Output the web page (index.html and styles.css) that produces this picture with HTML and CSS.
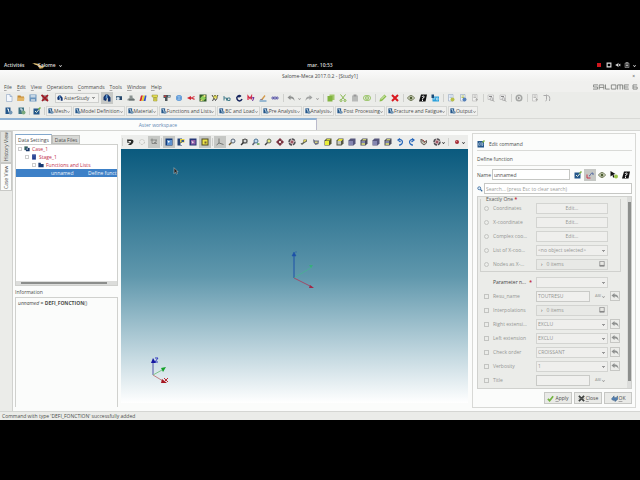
FILE: index.html
```html
<!DOCTYPE html>
<html lang="en">
<head>
<meta charset="utf-8">
<title>Salome-Meca 2017.0.2 - [Study1]</title>
<link rel="stylesheet" href="styles.css">
</head>
<body>
<svg class="sprite" aria-hidden="true">
  <symbol id="new" viewBox="0 0 16 16"><path d="M3 1h7l4 4v10H3z" fill="#f4f8fd" stroke="#7d97b8"/><path d="M10 1v4h4" fill="#c5d6ea" stroke="#7d97b8"/></symbol>
  <symbol id="open" viewBox="0 0 16 16"><path d="M1 3h6l1 2h6v9H1z" fill="#c48a35"/><path d="M2 7h13l-1 7H1z" fill="#e3b566"/></symbol>
  <symbol id="save" viewBox="0 0 16 16"><path d="M1 1h14v14H1z" fill="#6994bd"/><path d="M3 2h10v5H3z" fill="#c5d6e5"/><path d="M4 10h8v5H4z" fill="#b7cada"/></symbol>
  <symbol id="shut" viewBox="0 0 16 16"><path d="M2 2h12v12H2z" fill="#a99"/><path d="M1 2l13 12M14 2L2 14" stroke="#a01a25" stroke-width="3.500"/></symbol>
  <symbol id="aster" viewBox="0 0 16 16"><path d="M1 12V6l4-5h5l5 6v8h-5V8H8l-2 6z" fill="#12336f"/><path d="M6 2h3v7H5z" fill="#5f98cf"/></symbol>
  <symbol id="geom" viewBox="0 0 16 16"><path d="M2 4h12v8H2z" fill="#4d6c88"/><circle cx="6" cy="9" r="3" fill="#dce6ee"/><path d="M10 6h4v6h-4z" fill="#26466a"/></symbol>
  <symbol id="part" viewBox="0 0 16 16"><path d="M5 3h6v4l4 3v3H1v-3l4-2z" fill="#8a9291"/><path d="M4 10h11v3H4z" fill="#6b7372"/></symbol>
  <symbol id="mesh" viewBox="0 0 16 16"><path d="M4 3h4L5 14H1z" fill="#d22d34"/><path d="M8 3h4L9 14H5z" fill="#e8d22d"/><path d="M12 3h3l-2 11H9z" fill="#3555c9"/></symbol>
  <symbol id="note" viewBox="0 0 16 16"><path d="M2 2h11v4h-1v8H5V6H2z" fill="#e2dd56" stroke="#8c8a2c"/><path d="M6 7h5M6 10h5" stroke="#777328"/></symbol>
  <symbol id="flow" viewBox="0 0 16 16"><path d="M1 2h14v5H9v7H4V8H1z" fill="#4d555a"/><path d="M2 3h4v3H2z" fill="#c54141"/><path d="M10 3h4v3h-4z" fill="#9bc"/></symbol>
  <symbol id="globe" viewBox="0 0 16 16"><circle cx="8" cy="8" r="6" fill="#4386cf"/><path d="M2 8h12M8 2v12M4 4c3 2 6 2 8 0M4 12c3-2 6-2 8 0" stroke="#c5e0f7" fill="none"/></symbol>
  <symbol id="fish" viewBox="0 0 16 16"><path d="M0 8l8-4v3l7-3v2l-5 2 5 1v3L8 9v3z" fill="#cf2430"/></symbol>
  <symbol id="field" viewBox="0 0 16 16"><path d="M1 1h14v14H1z" fill="#315a28"/><path d="M2 9l5-6 7 5-5 6z" fill="#8fd05a"/><path d="M9 2h4v4H9zM3 11h4v3H3z" fill="#eadf80"/></symbol>
  <symbol id="xy" viewBox="0 0 16 16"><path d="M2 2l3 5 3-5 3 5 3-5M3 14l3-6 3 5 4-6" stroke="#444" stroke-width="2" fill="none"/><path d="M5 3h7v6H5z" fill="#e6db35" opacity=".7"/></symbol>
  <symbol id="hom" viewBox="0 0 16 16"><path d="M2 4v9M2 8h5v5M9 8h5v5H9z" stroke="#477f8c" stroke-width="2" fill="none"/></symbol>
  <symbol id="hook" viewBox="0 0 16 16"><path d="M12 5C8 1 2 5 4 10s8 5 10 0M8 2v5" stroke="#14235c" stroke-width="3" fill="none"/></symbol>
  <symbol id="med" viewBox="0 0 16 16"><path d="M2 12V4l4 5 3-5v7" stroke="#d7304b" stroke-width="2.500" fill="none"/><path d="M9 8l5-1-3 7" stroke="#6a2d99" stroke-width="2" fill="none"/></symbol>
  <symbol id="draw" viewBox="0 0 16 16"><path d="M1 14h14" stroke="#4483b8" stroke-width="2"/><path d="M4 11l7-9 2 2-6 8z" fill="#d39a4a"/><path d="M2 11h5" stroke="#447"/></symbol>
  <symbol id="links" viewBox="0 0 16 16"><path d="M2 6h3v4H2zM6 6h4v4H6zM11 6h3v4h-3z" stroke="#504da0" stroke-width="1.500" fill="#dde"/></symbol>
  <symbol id="undo" viewBox="0 0 16 16"><path d="M1 7l6-5v3c6 0 8 4 8 9-2-4-4-5-8-5v3z" fill="#8f9190"/></symbol>
  <symbol id="redo" viewBox="0 0 16 16"><path d="M15 7L9 2v3c-6 0-8 4-8 9 2-4 4-5 8-5v3z" fill="#a1a3a2"/></symbol>
  <symbol id="copy" viewBox="0 0 16 16"><path d="M5 1h10v11H5z" fill="#a2c86b"/><path d="M1 4h10v11H1z" fill="#82b440"/></symbol>
  <symbol id="cut" viewBox="0 0 16 16"><path d="M3 1l8 10M13 1L5 11" stroke="#86b74d" stroke-width="2"/><circle cx="4" cy="13" r="2" fill="none" stroke="#86b74d" stroke-width="2"/><circle cx="12" cy="13" r="2" fill="none" stroke="#86b74d" stroke-width="2"/></symbol>
  <symbol id="paste" viewBox="0 0 16 16"><path d="M2 3h12v12H2z" fill="#b8bab8"/><path d="M5 1h6v4H5z" fill="#999"/></symbol>
  <symbol id="dup" viewBox="0 0 16 16"><circle cx="6" cy="8" r="5" fill="none" stroke="#9bc56a" stroke-width="2"/><circle cx="10" cy="8" r="5" fill="none" stroke="#9bc56a" stroke-width="2"/><path d="M4 8h8M8 4v8" stroke="#9bc56a"/></symbol>
  <symbol id="pencil" viewBox="0 0 16 16"><path d="M1 15l1-5 9-9 4 4-9 9z" fill="#8bbd4b"/><path d="M4 11l8-8" stroke="#e5f2d4" stroke-width="2"/></symbol>
  <symbol id="del" viewBox="0 0 16 16"><path d="M2 2l12 12M14 2L2 14" stroke="#d91920" stroke-width="4"/></symbol>
  <symbol id="eye" viewBox="0 0 16 16"><path d="M1 8q7-10 14 0-7 10-14 0z" fill="#eef0df" stroke="#66704c" stroke-width="2"/><circle cx="8" cy="8" r="3" fill="#4c5d32"/></symbol>
  <symbol id="help" viewBox="0 0 16 16"><path d="M4 1h12l-3 14H0z" fill="#111"/><path d="M6 6c1-3 6-2 4 1L7 9v2m0 1v2" stroke="#fff" stroke-width="2" fill="none"/></symbol>
  <symbol id="fa" viewBox="0 0 16 16"><path d="M3 5h13v10H3z" fill="#2aa0db"/><path d="M1 1h5v7H1z" fill="#1b4c78"/><path d="M6 12V8h3M11 8h3v4h-3z" stroke="#fff" fill="none"/></symbol>
  <symbol id="docadd" viewBox="0 0 16 16"><path d="M3 1h9v13H3z" fill="#eef3fa" stroke="#8097b5"/><path d="M5 4h5M5 7h5" stroke="#7d9cc5"/><circle cx="11" cy="11" r="4" fill="#b8bf4a"/></symbol>
  <symbol id="docblue" viewBox="0 0 16 16"><path d="M3 1h9v13H3z" fill="#eef3fa" stroke="#8097b5"/><path d="M5 4h5M5 7h5" stroke="#b9c25c" stroke-width="2"/><circle cx="11" cy="11" r="4" fill="#5680b8"/></symbol>
  <symbol id="docgray" viewBox="0 0 16 16"><path d="M3 1h9v13H3z" fill="#f0f0ee" stroke="#aaa"/><path d="M5 4h5M5 7h5M9 11h5M11 8v6" stroke="#a8a8a6" stroke-width="1.500"/></symbol>
  <symbol id="docfind" viewBox="0 0 16 16"><path d="M2 2h11v9H2z" fill="#eee" stroke="#aaa"/><circle cx="9" cy="10" r="3" fill="#ddd" stroke="#888"/><path d="M11 12l3 3M4 5h6" stroke="#888" stroke-width="2"/></symbol>
  <symbol id="gear" viewBox="0 0 16 16"><circle cx="8" cy="8" r="5.500" fill="none" stroke="#a4a6a4" stroke-width="3"/><path d="M6 5l5 3-5 3z" fill="#999"/></symbol>
  <symbol id="bend" viewBox="0 0 16 16"><path d="M1 3h8q6 0 4 11M7 1v10q0 3-2 3" stroke="#aaa" stroke-width="2" fill="none"/></symbol>
  <symbol id="cmd" viewBox="0 0 16 16"><path d="M1 2h13v13H1z" fill="#24578a"/><path d="M5 5c-2 2-2 5 0 7M8 5v6M10 5c2 2 2 5 0 7" stroke="#dceaf4" stroke-width="1.500" fill="none"/><path d="M11 5l4-4" stroke="#83b64a" stroke-width="3"/></symbol>
  <symbol id="tag" viewBox="0 0 16 16"><path d="M1 1h10v13H1z" fill="#24578a"/><path d="M4 4h3v5h3" stroke="#e7f0f6" stroke-width="2" fill="none"/><circle cx="11" cy="11" r="4" fill="#7295b4"/></symbol>
  <symbol id="taggreen" viewBox="0 0 16 16"><path d="M1 1h11v13H1z" fill="#3f7384"/><path d="M4 4h4v5" stroke="#e7f0f6" stroke-width="2" fill="none"/><circle cx="11" cy="11" r="4" fill="#79a87c"/></symbol>
  <symbol id="edit" viewBox="0 0 16 16"><path d="M1 3h12v12H1z" fill="#24578a"/><path d="M4 8l3 3 5-6" stroke="#e7efe0" stroke-width="2" fill="none"/><path d="M11 5l4-4" stroke="#7ab042" stroke-width="3"/></symbol>
  <symbol id="dump" viewBox="0 0 16 16"><path d="M2 3h9q6 1 3 7l-4 4H4l4-4H3z" fill="#292b29"/><path d="M5 6h5v3H5z" fill="#eee"/></symbol>
  <symbol id="sync" viewBox="0 0 16 16"><circle cx="8" cy="8" r="5" fill="none" stroke="#c2c2bd" stroke-width="2" stroke-dasharray="4 2"/></symbol>
  <symbol id="axes" viewBox="0 0 16 16"><path d="M4 1v10h10M1 4h13M12 4v5H8" stroke="#747673" stroke-width="1.500" fill="none"/></symbol>
  <symbol id="trisel" viewBox="0 0 16 16"><path d="M6 1v9l9 3M6 10l-5 4" stroke="#747673" stroke-width="2" fill="none"/></symbol>
  <symbol id="selblue" viewBox="0 0 16 16"><path d="M1 1h14v14H1z" fill="#163d7b"/><path d="M4 4h10v10H4z" fill="#5c91cf"/><path d="M5 5l5 2-3 3z" fill="#fff"/></symbol>
  <symbol id="selmix" viewBox="0 0 16 16"><path d="M1 1h9v14H1z" fill="#264577"/><path d="M6 2h9v7H6z" fill="#e1cf48"/><path d="M9 4h5v4H9z" fill="#345a91"/><path d="M7 10h4v4H7z" fill="#f4f4ec"/></symbol>
  <symbol id="selpur" viewBox="0 0 16 16"><path d="M1 1h14v14H1z" fill="#253677"/><path d="M4 4h9v9H4z" fill="#8f5da6"/><path d="M5 6l5 2-3 3z" fill="#eee"/></symbol>
  <symbol id="selyel" viewBox="0 0 16 16"><path d="M1 1h14v14H1z" fill="#4e4b23"/><path d="M3 3h10v10H3z" fill="#ece347"/><path d="M7 7h4v4H7z" fill="#725c36"/></symbol>
  <symbol id="zoomfit" viewBox="0 0 16 16"><circle cx="10" cy="6" r="4" fill="#d9e4ee" stroke="#596574" stroke-width="2"/><path d="M7 9l-5 5" stroke="#6b572f" stroke-width="3"/></symbol>
  <symbol id="zoomdark" viewBox="0 0 16 16"><path d="M4 2h11v9H4z" fill="#8f928c"/><circle cx="10" cy="6" r="4" fill="#d5d8d7" stroke="#444" stroke-width="2"/><path d="M7 9l-5 5" stroke="#333" stroke-width="3"/></symbol>
  <symbol id="zoomgreen" viewBox="0 0 16 16"><circle cx="8" cy="6" r="4" fill="#bfdae9" stroke="#4a7294" stroke-width="2"/><path d="M5 9l-4 5" stroke="#596070" stroke-width="3"/><path d="M10 12h5" stroke="#5a9c4b" stroke-width="3"/></symbol>
  <symbol id="zoomyel" viewBox="0 0 16 16"><circle cx="10" cy="6" r="4" fill="#e5eb7e" stroke="#626c65" stroke-width="2"/><path d="M7 9l-5 5" stroke="#444" stroke-width="3"/></symbol>
  <symbol id="pan" viewBox="0 0 16 16"><path d="M8 0l4 4-2 2h1l1-2 4 4-4 4-1-2-1 0 2 2-4 4-4-4 2-2-2 2-4-4 4-4 2 2-2-2z" fill="#7a3542"/><path d="M6 6h4v4H6z" fill="#e9ddd8"/></symbol>
  <symbol id="orbit" viewBox="0 0 16 16"><circle cx="8" cy="8" r="6" fill="#dac9cb" stroke="#4c4c50" stroke-width="3" stroke-dasharray="7 2"/><path d="M5 8h6M8 5v6" stroke="#8a3242" stroke-width="2"/></symbol>
  <symbol id="scale" viewBox="0 0 16 16"><path d="M1 11l5-2 1-6h7v4l-5 3-5 4z" fill="#63665d"/><path d="M7 7l5-3" stroke="#ddd35b" stroke-width="3"/></symbol>
  <symbol id="rot" viewBox="0 0 16 16"><path d="M2 2l4 3h8l-1 7-6 2-4-5z" fill="#6e7080"/><path d="M6 7h5v3H6z" fill="#d5d17d"/></symbol>
  <symbol id="cubey" viewBox="0 0 16 16"><path d="M1 5l4-4h10v10l-4 4H1z" fill="#555536"/><path d="M2 6h8v8H2z" fill="#e9ed38"/><path d="M6 2h7l-2 3H4z" fill="#cbd13f"/></symbol>
  <symbol id="cubeh" viewBox="0 0 16 16"><path d="M1 5l4-4h10v10l-4 4H1z" fill="#555747"/><path d="M3 6h7v7H3z" fill="#c5c8bf"/><path d="M6 2h8l-3 4H3z" fill="#e6e33b"/></symbol>
  <symbol id="cubep" viewBox="0 0 16 16"><path d="M1 5l4-4h10v10l-4 4H1z" fill="#55567c"/><path d="M2 6h8v8H2z" fill="#8486b0"/></symbol>
  <symbol id="cubeb" viewBox="0 0 16 16"><path d="M1 5l4-4h10v10l-4 4H1z" fill="#4a4c5c"/><path d="M3 6h7v4H3z" fill="#8185aa"/><path d="M3 10h7v4H3zM6 2h7l-2 3H4z" fill="#c6c878"/></symbol>
  <symbol id="turnl" viewBox="0 0 16 16"><path d="M4 3c12-2 11 11 2 11M8 1L4 4l5 4" stroke="#2868bb" stroke-width="2.500" fill="none"/></symbol>
  <symbol id="turnr" viewBox="0 0 16 16"><path d="M12 3C0 1 1 14 10 14M8 1l4 3-5 4" stroke="#2868bb" stroke-width="2.500" fill="none"/></symbol>
  <symbol id="reset" viewBox="0 0 16 16"><path d="M2 2v7l6 5 5-4V5L8 9z" fill="#c9c5b2" stroke="#66615d" stroke-width="2"/><path d="M5 3l5 5" stroke="#a54a44" stroke-width="2"/></symbol>
  <symbol id="ball" viewBox="0 0 16 16"><circle cx="8" cy="8" r="4" fill="#a42a36"/><circle cx="7" cy="7" r="1.500" fill="#d67f83"/></symbol>
  <symbol id="pick" viewBox="0 0 16 16"><path d="M1 0l10 6-4 1 2 6-3 0-1-5-4 3z" fill="#111"/><circle cx="12" cy="11" r="4" fill="#9bc54c"/></symbol>
  <symbol id="plot" viewBox="0 0 16 16"><path d="M2 7v7h7" stroke="#c7364c" stroke-width="2" fill="none"/><path d="M6 10c4 0 2-7 8-6v4" stroke="#5369a2" stroke-width="2" fill="none"/></symbol>
  <symbol id="search" viewBox="0 0 16 16"><circle cx="6" cy="6" r="4" fill="#dbe9f6" stroke="#2c6298" stroke-width="2"/><path d="M9 9l5 5" stroke="#2c6298" stroke-width="3"/></symbol>
  <symbol id="folder" viewBox="0 0 16 16"><path d="M1 2h6l1 3h7v9H1z" fill="#183a73"/></symbol>
  <symbol id="stage" viewBox="0 0 16 16"><path d="M3 1h10v14H3z" fill="#203c8e"/><path d="M5 4h6M5 8h6" stroke="#6682c7"/></symbol>
  <symbol id="case" viewBox="0 0 16 16"><path d="M1 1h9v10H1z" fill="#34625e"/><path d="M5 5h10v9H5z" fill="#163668"/><path d="M7 6h3v4H7z" fill="#d6e0e8"/></symbol>
  <symbol id="book" viewBox="0 0 16 16"><path d="M2 1h12v13H2z" fill="#e7e7e3" stroke="#888" stroke-width="2"/><path d="M2 12h12" stroke="#888" stroke-width="3"/></symbol>
  <symbol id="check" viewBox="0 0 16 16"><path d="M2 9l4 4 8-10" stroke="#73b441" stroke-width="4" fill="none"/></symbol>
  <symbol id="cross" viewBox="0 0 16 16"><path d="M2 2l12 12M14 2L2 14" stroke="#3e4240" stroke-width="4"/><path d="M1 8h14" stroke="#777" stroke-width="1"/></symbol>
  <symbol id="ok" viewBox="0 0 16 16"><path d="M1 9l6-7v4h5l3-4v8l-6 5v-3H4z" fill="#5280b2" stroke="#29496f"/></symbol>
</svg>

<header class="desktop-bar">
  <span class="activities">Activités</span>
  <span class="app-menu">
    <svg class="app-logo" viewBox="0 0 22 12"><path d="M0 3l10 1 5 4 6-2-4 5-5 1-3-5z" fill="#c7a052"/><path d="M3 4l7 2 4 4" stroke="#f3df9d" fill="none"/></svg>
    <span>Salome</span><i class="caret light"></i>
  </span>
  <time class="clock">mar. 10:53</time>
  <span class="tray">
    <i class="rec"></i>
    <svg viewBox="0 0 16 16"><path d="M3 3h10v10H3z" fill="none" stroke="#ddd" stroke-width="3"/></svg>
    <svg viewBox="0 0 16 16"><path d="M2 6h3l4-4v12l-4-4H2z" fill="#ddd"/><path d="M11 5l3 6M14 5l-3 6" stroke="#ddd" stroke-width="2"/></svg>
    <svg viewBox="0 0 16 16"><path d="M3 3h10v12H3zM6 1h4v2H6z" fill="none" stroke="#aaa" stroke-width="2"/><path d="M8 5v8M5 9h6" stroke="#ddd" stroke-width="2"/></svg>
    <i class="caret light"></i>
  </span>
</header>

<div class="window">
  <div class="titlebar"><h1>Salome-Meca 2017.0.2 - [Study1]</h1><button class="win-close" aria-label="Close window">×</button></div>
  <nav class="menubar">
    <a href="#"><u>F</u>ile</a><a href="#"><u>E</u>dit</a><a href="#"><u>V</u>iew</a><a href="#"><u>O</u>perations</a><a href="#"><u>C</u>ommands</a><a href="#"><u>T</u>ools</a><a href="#"><u>W</u>indow</a><a href="#"><u>H</u>elp</a>
    <svg class="brand" viewBox="0 0 108 14" role="img" aria-label="Salome 6"><g fill="none" stroke="#777976" stroke-width="2"><path d="M12 2H1v5h10v5H0M15 13V2h11v11M15 8h11M30 1v11h10M44 2h11v10H44zM59 13V2h12v11M65 2v11M86 2H75v10h11M75 7h10M106 2H96v10h10V7H96"/></g></svg>
  </nav>

  <div class="toolbar main-tools">
    <button class="tool"><svg><use href="#new"/></svg></button><button class="tool"><svg><use href="#open"/></svg></button><button class="tool"><svg><use href="#save"/></svg></button><button class="tool"><svg><use href="#shut"/></svg></button>
    <label class="module"><svg><use href="#aster"/></svg><select aria-label="Module"><option>AsterStudy</option></select></label>
    <button class="tool on"><svg><use href="#aster"/></svg></button><button class="tool"><svg><use href="#geom"/></svg></button><button class="tool"><svg><use href="#part"/></svg></button><button class="tool"><svg><use href="#mesh"/></svg></button><button class="tool"><svg><use href="#note"/></svg></button><button class="tool"><svg><use href="#flow"/></svg></button><button class="tool"><svg><use href="#globe"/></svg></button><button class="tool"><svg><use href="#fish"/></svg></button><button class="tool"><svg><use href="#field"/></svg></button><button class="tool"><svg><use href="#xy"/></svg></button><button class="tool"><svg><use href="#hom"/></svg></button><button class="tool"><svg><use href="#hook"/></svg></button><button class="tool"><svg><use href="#med"/></svg></button><button class="tool"><svg><use href="#draw"/></svg></button><button class="tool"><svg><use href="#links"/></svg></button>
    <i class="sep"></i>
    <button class="tool"><svg><use href="#undo"/></svg></button><i class="caret"></i><button class="tool"><svg><use href="#redo"/></svg></button><i class="caret"></i>
    <i class="sep"></i>
    <button class="tool"><svg><use href="#copy"/></svg></button><button class="tool"><svg><use href="#cut"/></svg></button><button class="tool"><svg><use href="#paste"/></svg></button><button class="tool"><svg><use href="#dup"/></svg></button>
    <i class="sep"></i>
    <button class="tool"><svg><use href="#pencil"/></svg></button><button class="tool"><svg><use href="#del"/></svg></button>
    <i class="sep"></i>
    <button class="tool"><svg><use href="#eye"/></svg></button><button class="tool"><svg><use href="#help"/></svg></button><button class="tool"><svg><use href="#fa"/></svg></button>
    <i class="sep"></i>
    <button class="tool"><svg><use href="#docadd"/></svg></button><button class="tool"><svg><use href="#docblue"/></svg></button><button class="tool"><svg><use href="#docgray"/></svg></button>
    <i class="sep"></i>
    <button class="tool"><svg><use href="#docfind"/></svg></button><button class="tool"><svg><use href="#docfind"/></svg></button>
    <i class="sep"></i>
    <button class="tool"><svg><use href="#gear"/></svg></button>
    <i class="sep"></i>
    <button class="tool"><svg><use href="#docgray"/></svg></button><button class="tool"><svg><use href="#bend"/></svg></button>
  </div>

  <div class="toolbar category-tools">
    <button class="tool"><svg><use href="#tag"/></svg></button><button class="tool"><svg><use href="#taggreen"/></svg></button><i class="sep"></i><button class="tool"><svg><use href="#edit"/></svg></button><i class="sep"></i>
    <button class="cat"><svg><use href="#tag"/></svg>Mesh<i class="caret"></i></button>
    <button class="cat"><svg><use href="#tag"/></svg>Model Definition<i class="caret"></i></button>
    <button class="cat"><svg><use href="#tag"/></svg>Material<i class="caret"></i></button>
    <button class="cat"><svg><use href="#tag"/></svg>Functions and Lists<i class="caret"></i></button>
    <button class="cat"><svg><use href="#tag"/></svg>BC and Load<i class="caret"></i></button>
    <button class="cat"><svg><use href="#tag"/></svg>Pre Analysis<i class="caret"></i></button>
    <button class="cat"><svg><use href="#tag"/></svg>Analysis<i class="caret"></i></button>
    <button class="cat"><svg><use href="#tag"/></svg>Post Processing<i class="caret"></i></button>
    <button class="cat"><svg><use href="#tag"/></svg>Fracture and Fatigue<i class="caret"></i></button>
    <button class="cat"><svg><use href="#tag"/></svg>Output<i class="caret"></i></button>
  </div>

  <div class="workspace-tabs"><button>Aster workspace</button></div>

  <main class="workspace">
    <div class="side-tabs"><button>History View</button><button class="current">Case View</button></div>

    <aside class="data">
      <div class="data-tabs"><button class="current">Data Settings</button><button>Data Files</button></div>
      <div class="tree-box">
        <ul class="tree">
          <li class="d0"><i class="twist"></i><svg><use href="#case"/></svg>Case_1</li>
          <li class="d1"><i class="twist"></i><svg><use href="#stage"/></svg>Stage_1</li>
          <li class="d2"><i class="twist"></i><svg><use href="#folder"/></svg>Functions and Lists</li>
          <li class="selected"><span>unnamed</span><span>Define funct</span></li>
        </ul>
        <div class="hscroll"><i></i></div>
      </div>
      <h2>Information</h2>
      <div class="info"><em>unnamed</em> = <b>DEFI_FONCTION</b>()</div>
    </aside>

    <section class="viewer">
      <div class="toolbar view-tools">
        <i class="sep"></i>
        <button class="tool"><svg><use href="#dump"/></svg></button><button class="tool"><svg><use href="#sync"/></svg></button><button class="tool on"><svg><use href="#axes"/></svg></button>
        <i class="sep"></i>
        <button class="tool on"><svg><use href="#selblue"/></svg></button><button class="tool"><svg><use href="#selmix"/></svg></button><button class="tool"><svg><use href="#selpur"/></svg></button><button class="tool on"><svg><use href="#selyel"/></svg></button>
        <i class="sep"></i>
        <button class="tool on"><svg><use href="#trisel"/></svg></button><button class="tool"><svg><use href="#zoomfit"/></svg></button><button class="tool"><svg><use href="#zoomdark"/></svg></button><button class="tool"><svg><use href="#zoomgreen"/></svg></button><button class="tool"><svg><use href="#zoomyel"/></svg></button><button class="tool"><svg><use href="#pan"/></svg></button><button class="tool"><svg><use href="#orbit"/></svg></button><button class="tool"><svg><use href="#scale"/></svg></button><button class="tool"><svg><use href="#rot"/></svg></button><button class="tool"><svg><use href="#cubey"/></svg></button><button class="tool"><svg><use href="#cubeh"/></svg></button><button class="tool"><svg><use href="#cubep"/></svg></button><button class="tool"><svg><use href="#cubeb"/></svg></button><button class="tool"><svg><use href="#cubep"/></svg></button><button class="tool"><svg><use href="#cubeb"/></svg></button><button class="tool"><svg><use href="#turnl"/></svg></button><button class="tool"><svg><use href="#turnr"/></svg></button><button class="tool"><svg><use href="#reset"/></svg></button>
        <button class="tool drop"><svg><use href="#orbit"/></svg><i class="caret dark"></i></button>
        <i class="sep"></i>
        <button class="tool drop"><svg><use href="#ball"/></svg><i class="caret dark"></i></button>
      </div>
      <div class="scene">
        <svg class="origin" viewBox="0 0 26 40"><path d="M3 27V3" stroke="#1c50a8"/><path d="M1 5l2-4 2 4zM4 1h2" fill="#1c50a8" stroke="#1c50a8" stroke-width=".5"/><path d="M3 27l18-11" stroke="#43b78c" stroke-width=".7"/><path d="M18 14l4 0-2 3z" fill="#37ae7b"/><path d="M3 27l18 9" stroke="#a04b68"/><path d="M19 34l4 3h-5z" fill="#a02848"/></svg>
        <svg class="trihedron" viewBox="0 0 20 30"><path d="M4 20V6" stroke="#5557a8"/><path d="M2 8l2-5 3 5z" fill="#1616a0"/><path d="M6 3h3l-3 4h3" fill="none" stroke="#3038c0"/><path d="M4 20l9-5" stroke="#7fc48a"/><path d="M12 13l5-1-3 5z" fill="#14a22b"/><path d="M4 20l10 6" stroke="#c28084"/><path d="M13 24l5 4h-6z" fill="#a41721"/><path d="M15 23l4 4m0-4l-4 4" stroke="#bd2830"/></svg>
        <svg class="pointer" viewBox="0 0 8 12"><path d="M1 1v9l2-2 2 3 1-1-1-3h2z" fill="#222" stroke="#ddd" stroke-width=".7"/></svg>
      </div>
    </section>

    <form class="command">
      <h2 class="cmd-title"><svg><use href="#cmd"/></svg>Edit command</h2>
      <p class="cmd-kind">Define function</p>
      <div class="name-row">
        <label for="name">Name</label><input id="name" value="unnamed">
        <button type="button" class="tool"><svg><use href="#edit"/></svg></button><button type="button" class="tool on"><svg><use href="#plot"/></svg></button><button type="button" class="tool"><svg><use href="#eye"/></svg></button><button type="button" class="tool"><svg><use href="#pick"/></svg></button><button type="button" class="tool"><svg><use href="#help"/></svg></button>
      </div>
      <div class="search-row"><svg><use href="#search"/></svg><input aria-label="Search" placeholder="Search... (press Esc to clear search)"></div>
      <div class="params">
        <div class="param-list">
          <fieldset>
            <legend>Exactly One <b>*</b></legend>
            <div class="row"><input type="radio" name="one" id="r1"><label for="r1">Coordinates</label><button type="button" class="wide">Edit...</button></div>
            <div class="row"><input type="radio" name="one" id="r2"><label for="r2">X-coordinate</label><button type="button" class="wide">Edit...</button></div>
            <div class="row"><input type="radio" name="one" id="r3"><label for="r3">Complex coo...</label><button type="button" class="wide">Edit...</button></div>
            <div class="row"><input type="radio" name="one" id="r4"><label for="r4">List of X-coo...</label><select aria-label="List of X-coordinates"><option>&lt;no object selected&gt;</option></select></div>
            <div class="row"><input type="radio" name="one" id="r5"><label for="r5">Nodes as X-...</label><div class="items"><span>›</span>0 items<svg><use href="#book"/></svg></div></div>
          </fieldset>
          <div class="row required"><span></span><label for="pn">Parameter n... <b>*</b></label><select id="pn"><option></option></select></div>
          <div class="row"><input type="checkbox" id="c1"><label for="c1">Resu_name</label><div class="pair"><input aria-label="Resu_name value" value="TOUTRESU"><span>ABI<i class="caret"></i></span></div><button type="button" class="revert"><svg><use href="#undo"/></svg></button></div>
          <div class="row"><input type="checkbox" id="c2"><label for="c2">Interpolations</label><div class="items"><span>›</span>0 items<svg><use href="#book"/></svg></div></div>
          <div class="row"><input type="checkbox" id="c3"><label for="c3">Right extensi...</label><select aria-label="Right extension"><option>EXCLU</option></select><button type="button" class="revert"><svg><use href="#undo"/></svg></button></div>
          <div class="row"><input type="checkbox" id="c4"><label for="c4">Left extension</label><select aria-label="Left extension"><option>EXCLU</option></select><button type="button" class="revert"><svg><use href="#undo"/></svg></button></div>
          <div class="row"><input type="checkbox" id="c5"><label for="c5">Check order</label><select aria-label="Check order"><option>CROISSANT</option></select><button type="button" class="revert"><svg><use href="#undo"/></svg></button></div>
          <div class="row"><input type="checkbox" id="c6"><label for="c6">Verbosity</label><select aria-label="Verbosity"><option>1</option></select><button type="button" class="revert"><svg><use href="#undo"/></svg></button></div>
          <div class="row"><input type="checkbox" id="c7"><label for="c7">Title</label><div class="pair"><input aria-label="Title value"><span>ABI<i class="caret"></i></span></div></div>
        </div>
        <div class="vscroll"><i></i></div>
      </div>
      <div class="actions">
        <button type="button"><svg><use href="#check"/></svg><span><u>A</u>pply</span></button><button type="button"><svg><use href="#cross"/></svg><span><u>C</u>lose</span></button><button type="button"><svg><use href="#ok"/></svg><span><u>O</u>K</span></button>
      </div>
    </form>
  </main>
  <footer class="status">Command with type 'DEFI_FONCTION' successfully added</footer>
</div>
</body>
</html>
```
FILE: styles.css
```css
* { box-sizing: border-box; }
body {
  margin: 0;
  min-height: 100vh;
  padding: 60px 0;
  display: flex;
  flex-direction: column;
  background: #000;
  color: #4a4c4a;
  font: 5px/8px "Open Sans", "Noto Sans", sans-serif;
}
button, input, select { font: inherit; color: inherit; margin: 0; padding: 0; border: 0; border-radius: 0; background: none; outline: 0; }
h1, h2, p, ul { margin: 0; padding: 0; font-size: inherit; font-weight: normal; list-style: none; }
a { color: inherit; text-decoration: none; }
svg { width: 8px; height: 8px; flex: none; display: block; }
.sprite { display: none; }
i { font-style: normal; }

.caret { width: 3px; height: 3px; flex: none; border: solid #999; border-width: 0 1px 1px 0; transform: rotate(45deg) scale(.7); }
.caret.light { border-color: #ddd; }
.caret.dark { border-color: #333; }
.sep { width: 1px; height: 8px; margin: 0 2px; background: #cfd0cd; flex: none; }

.desktop-bar { display: grid; grid-template-columns: 28px 1fr auto 1fr; align-items: center; height: 10px; padding: 0 4px; color: #ddd; font-weight: 600; }
.app-menu { display: flex; align-items: center; }
.app-menu .caret { margin-left: 3px; }
.app-logo { width: 14px; height: 8px; margin-right: -8px; }
.clock { margin-right: 28px; }
.tray { display: flex; justify-content: flex-end; align-items: center; gap: 3px; }
.tray svg { width: 6px; height: 6px; }
.rec { width: 4px; height: 4px; background: #d0161d; margin-right: 2px; }

.window { flex: 1; display: flex; flex-direction: column; min-height: 350px; background: #ebece9; }
.titlebar { display: grid; grid-template-columns: 1fr auto 1fr; align-items: center; height: 12px; background: linear-gradient(#fafafa, #f0f0ee); }
.titlebar h1 { grid-column: 2; color: #444; }
.win-close { justify-self: end; padding-right: 5px; }
.menubar { display: flex; align-items: center; gap: 5px; height: 10px; padding: 0 2px 0 4px; background: #f0f0ee; }
.menubar u, .actions u { text-decoration-thickness: 1px; text-decoration-color: #aaa; }
.brand { width: 45px; height: 6px; margin-left: auto; }

.toolbar { display: flex; align-items: center; }
.tool { width: 12px; height: 12px; flex: none; display: grid; place-items: center; }
.tool.on { background: #c6c8c5; }
.main-tools { height: 12px; padding-left: 3px; }
.main-tools .sep { margin: 0 1px 0 2px; }
.main-tools .caret { margin: 0 2px 0 1px; }
.module { display: flex; align-items: center; width: 44px; height: 10px; margin: 0 2px 0 4px; padding: 0 1px; border: 1px solid #cfd0ce; background: #f2f2f0; }
.module svg { width: 6px; height: 6px; }
select {
  appearance: none;
  background-image: linear-gradient(#999, #999), linear-gradient(#999, #999);
  background-size: 3px 1px, 1px 1px;
  background-position: right 2px top 4px, right 3px top 5px;
  background-repeat: no-repeat;
}
.module select { flex: 1; min-width: 0; height: 8px; padding-left: 1px; background-position: right 2px top 3px, right 3px top 4px; }
.category-tools { height: 14px; padding-left: 3px; gap: 1px; }
.category-tools .sep { margin: 0; }
.cat { display: flex; align-items: center; height: 10px; padding: 0 1px; border: 1px solid #d6d7d4; background: #f0f0ee; white-space: nowrap; }
.cat svg { width: 6px; height: 6px; }

.workspace-tabs { height: 13px; display: flex; align-items: flex-end; border-top: 1px solid #d8d9d6; border-bottom: 1px solid #d5d6d3; }
.workspace-tabs button { width: 49.5%; height: 12px; background: #fcfdfc; border-top: 2px solid #8fb2d4; border-right: 1px solid #bbc; color: #6289b4; }

.workspace { flex: 1; display: grid; grid-template-columns: 13px 105px 1fr 168px; background: #fbfcfb; min-height: 0; }
.side-tabs { display: flex; flex-direction: column; background: #ebece9; border-right: 1px solid #d1d2cf; }
.side-tabs button { height: 32px; writing-mode: vertical-rl; transform: rotate(180deg); display: grid; place-items: center; background: #e0e1de; border: 1px solid #c8c9c6; }
.side-tabs .current { height: 28px; background: #fbfcfb; }

.data { display: flex; flex-direction: column; padding: 3px 0 4px 2px; min-width: 0; }
.data-tabs { display: flex; align-items: flex-end; height: 10px; }
.data-tabs button { height: 9px; padding: 0 2px; background: #d7d8d5; border: 1px solid #bfc0bd; }
.data-tabs .current { height: 10px; background: #fff; border-top: 1px solid #82a8cd; border-bottom: 0; }
.tree-box { flex: 144; display: flex; flex-direction: column; border: 1px solid #cfd0cd; background: #fff; overflow: hidden; }
.tree { flex: 1; }
.tree li { display: flex; align-items: center; gap: 2px; height: 8px; color: #c02d49; white-space: nowrap; }
.tree svg { width: 6px; height: 6px; }
.tree .d0 { padding-left: 2px; }
.tree .d1 { padding-left: 9px; }
.tree .d2 { padding-left: 16px; }
.twist { width: 4px; height: 4px; border: 1px solid #ccc; }
.tree .selected { display: grid; grid-template-columns: 37px 1fr; padding-left: 35px; gap: 0; background: #3d80c7; color: #f2f6fb; }
.hscroll, .vscroll { background: #dcdddb; }
.hscroll { height: 4px; padding: 1px 10px 1px 5px; }
.hscroll i { display: block; height: 2px; background: #8c8e8c; }
.data h2 { padding: 2px 0; height: 11px; }
.info { flex: 110; padding: 1px 2px; border: 1px solid #d0d1ce; border-bottom: 0; }

.viewer { display: flex; flex-direction: column; padding: 4px 4px 8px 3px; min-width: 0; }
.view-tools { height: 14px; background: #ecedeb; }
.view-tools .sep { margin: 0 1px; }
.view-tools .drop { width: 17px; display: flex; align-items: center; justify-content: center; gap: 1px; }
.scene { flex: 1; position: relative; background: linear-gradient(#0a5a7e, #5f97ac 50%, #fff); }
.scene svg { position: absolute; }
.scene .origin { left: 49%; top: 40%; width: 26px; height: 40px; }
.scene .trihedron { left: 8%; bottom: 18px; width: 20px; height: 30px; }
.scene .pointer { left: 15%; top: 7%; width: 6px; height: 8px; }

.command { display: flex; flex-direction: column; margin: 2px 4px 3px 0; padding: 3px 3px 3px 4px; border: 1px solid #d8d9d6; min-width: 0; }
.cmd-title { display: flex; align-items: center; gap: 4px; height: 14px; border-bottom: 1px solid #d9dad7; }
.cmd-kind { height: 15px; padding: 4px 0; border-bottom: 1px solid #d9dad7; }
.name-row { display: flex; align-items: center; height: 17px; }
.name-row input { flex: 1; min-width: 0; height: 11px; margin: 0 2px 0 1px; padding: 0 1px; border: 1px solid #c6c7c4; background: #fff; }
.search-row { display: flex; align-items: center; gap: 1px; height: 11px; margin-bottom: 2px; }
.search-row svg { width: 6px; height: 6px; }
.search-row input { flex: 1; min-width: 0; height: 11px; padding: 0 1px; border: 1px solid #c6c7c4; background: #fff; }
::placeholder { color: #9c9e9b; opacity: 1; }

.params { flex: 1; display: flex; overflow: hidden; background: #ebece9; border: 1px solid #d0d1ce; color: #949693; min-height: 0; }
.param-list { flex: 1; padding: 0 2px; min-width: 0; }
.vscroll { width: 4px; padding: 5px 0 7px 1px; }
.vscroll i { display: block; height: 100%; background: #8c8e8c; }
fieldset { margin: 0 4px 3px 0; padding: 0; border: 1px solid #d0d1ce; border-top: 0; min-width: 0; }
legend { height: 4px; line-height: 4px; padding: 0 5px; color: #555; }
legend b, .row b { color: #c12d3b; }
.row { display: grid; grid-template-columns: 5px 43px 72px 11px; column-gap: 2px; align-items: center; height: 14px; padding-left: 4px; }
fieldset .row { padding-left: 3px; }
.row label { padding-left: 2px; white-space: nowrap; overflow: hidden; }
.required label { display: flex; justify-content: space-between; padding-right: 2px; color: #444; }
.row input[type=radio], .row input[type=checkbox] { appearance: none; width: 5px; height: 5px; border: 1px solid #c3c4c1; }
.row input[type=radio] { border-radius: 50%; }
.row select, .wide, .items { width: 100%; height: 11px; padding-left: 1px; border: 1px solid #d3d4d1; background-color: #efefed; }
.wide { padding: 0; }
.items { display: flex; align-items: center; padding: 0 2px 0 4px; background: #e8e9e6; gap: 4px; }
.items span { color: #333; }
.items svg { width: 6px; height: 6px; margin-left: auto; }
.pair { display: flex; align-items: center; gap: 5px; }
.pair input { width: 54px; height: 11px; padding: 0 1px; border: 1px solid #c9cac7; background: #f0f0ee; }
.pair span { display: flex; align-items: center; gap: 1px; font-size: 4px; }
.revert { width: 10px; height: 10px; display: grid; place-items: center; border: 1px solid #c6c7c4; }
.actions { display: flex; justify-content: flex-end; gap: 2px; padding-top: 3px; }
.actions button { width: 28px; height: 12px; display: flex; align-items: center; justify-content: center; gap: 1px; border: 1px solid #c6c7c4; background: #e9eae7; }
.actions svg { width: 7px; height: 7px; }

.status { height: 9px; padding-left: 2px; background: #ebece9; border-top: 1px solid #d5d6d3; }
```
